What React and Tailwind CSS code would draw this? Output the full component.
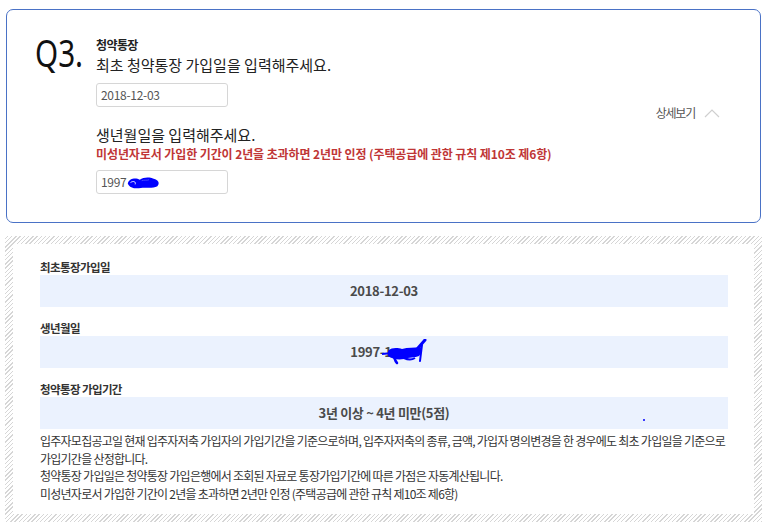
const KR = "font-['Noto_Sans_CJK_KR','Noto_Sans',sans-serif]";

const Scribble = ({ className }) => (
  <svg className={className} viewBox="0 0 40 16" fill="none">
    <path
      d="M3 9 C5 3 12 3 16 5 C20 2 27 2 31 4 C36 5 38 9 35 12 C30 15 22 13 17 14 C11 15 5 14 3 9 Z"
      fill="#0000ff"
    />
    <path d="M6 8 C9 6 12 7 11 10" stroke="#ffffff" strokeWidth="1" />
    <path d="M18 6 C21 5 24 6 26 5" stroke="#5a5aff" strokeWidth="0.8" />
  </svg>
);

const BigScribble = ({ className }) => (
  <svg className={className} viewBox="0 0 46 26" fill="none">
    <path d="M0 15 L10 14" stroke="#0000ff" strokeWidth="2" />
    <path
      d="M6 12 C10 8 16 9 20 10 C26 8 32 9 38 8 C41 9 40 14 37 17 C33 19 27 18 22 20 C16 21 10 20 6 17 Z"
      fill="#0000ff"
    />
    <path d="M36 9 L43 1" stroke="#0000ff" strokeWidth="3" strokeLinecap="round" />
    <path d="M40 6 L38 22" stroke="#0000ff" strokeWidth="2" strokeLinecap="round" />
    <path d="M12 18 C13 21 14 23 15 24" stroke="#0000ff" strokeWidth="2.5" strokeLinecap="round" />
    <path d="M22 19 C26 21 30 21 33 19" stroke="#0000ff" strokeWidth="2" />
  </svg>
);

const Field = ({ children }) => (
  <div className="mt-[8px] flex h-[24px] w-[132px] items-center rounded-[3px] border border-[#d6d6d6] bg-white pl-[4px] text-[12px] tracking-[-0.3px] text-[#555]">
    {children}
  </div>
);

const Row = ({ label, first, children }) => (
  <>
    <div className={`${first ? "" : "mt-[13px]"} text-[11.5px] font-bold leading-4 tracking-[-0.6px] text-[#333]`}>
      {label}
    </div>
    <div className="relative flex h-[32px] items-center justify-center bg-[#ebf2fe] text-[13px] font-bold tracking-[-0.3px] text-[#4a4a4a]">
      {children}
    </div>
  </>
);

export default function App() {
  return (
    <div className={`${KR} min-h-screen bg-white pl-[5px] pr-[11px] pt-[9px]`}>
      {/* ===================== Question card ===================== */}
      <div className="mx-[1px] flex h-[214px] items-center justify-between rounded-[7px] border border-[#4a72c6] pl-[28px] pr-[40px]">
        <div className="flex self-start pt-[27px]">
          <div className="w-[61px]">
            <div className="mt-[-4px] origin-left scale-x-[0.78] font-['Noto_Sans',sans-serif] text-[38px] font-normal leading-none text-[#111]">
              Q3.
            </div>
          </div>
          <div className="flex flex-col">
            <div className="text-[12px] font-bold leading-4 tracking-[-0.6px] text-[#222]">청약통장</div>
            <div className="mt-[2px] text-[15px] leading-[20px] text-[#222]">
              최초 청약통장 가입일을 입력해주세요.
            </div>
            <Field>2018-12-03</Field>
            <div className="mt-[18px] text-[15px] leading-[20px] text-[#222]">
              생년월일을 입력해주세요.
            </div>
            <div className="mt-[1px] text-[12px] font-bold leading-4 tracking-[-0.1px] text-[#bf3636]">
              미성년자로서 가입한 기간이 2년을 초과하면 2년만 인정 (주택공급에 관한 규칙 제10조 제6항)
            </div>
            <Field>
              <span>1997</span>
              <Scribble className="ml-[-1px] h-[15px] w-[37px]" />
            </Field>
          </div>
        </div>
        <div className="mb-[6px] flex items-center gap-[9px]">
          <span className="text-[12px] tracking-[-1.2px] text-[#555]">상세보기</span>
          <svg width="16" height="9" viewBox="0 0 16 9" fill="none">
            <polyline points="1,8 8,1 15,8" stroke="#cfcfcf" strokeWidth="1.2" />
          </svg>
        </div>
      </div>

      {/* ===================== Result box ===================== */}
      <div className="mt-[13px] bg-[repeating-linear-gradient(-45deg,#d6d6d6_0px,#d6d6d6_1px,#ffffff_1px,#ffffff_3px)] p-[8px]">
        <div className="bg-white pb-[12px] pl-[27px] pr-[26px] pt-[15px]">
          <Row label="최초통장가입일" first>
            2018-12-03
          </Row>
          <Row label="생년월일">
            <span className="ml-[10px] flex items-center">
              1997-1
              <BigScribble className="ml-[-10px] h-[26px] w-[46px]" />
            </span>
          </Row>
          <Row label="청약통장 가입기간">
            3년 이상 ~ 4년 미만(5점)
            <span className="absolute left-[603px] top-[22px] h-[2px] w-[2px] bg-[#3b3bff]" />
          </Row>
          <div className="mt-[3px] text-[12px] leading-[17.5px] tracking-[-0.75px] text-[#333]">
            <div>
              입주자모집공고일 현재 입주자저축 가입자의 가입기간을 기준으로하며, 입주자저축의 종류, 금액, 가입자 명의변경을 한 경우에도 최초 가입일을 기준으로
            </div>
            <div>가입기간을 산정합니다.</div>
            <div>청약통장 가입일은 청약통장 가입은행에서 조회된 자료로 통장가입기간에 따른 가점은 자동계산됩니다.</div>
            <div>미성년자로서 가입한 기간이 2년을 초과하면 2년만 인정 (주택공급에 관한 규칙 제10조 제6항)</div>
          </div>
        </div>
      </div>
    </div>
  );
}
